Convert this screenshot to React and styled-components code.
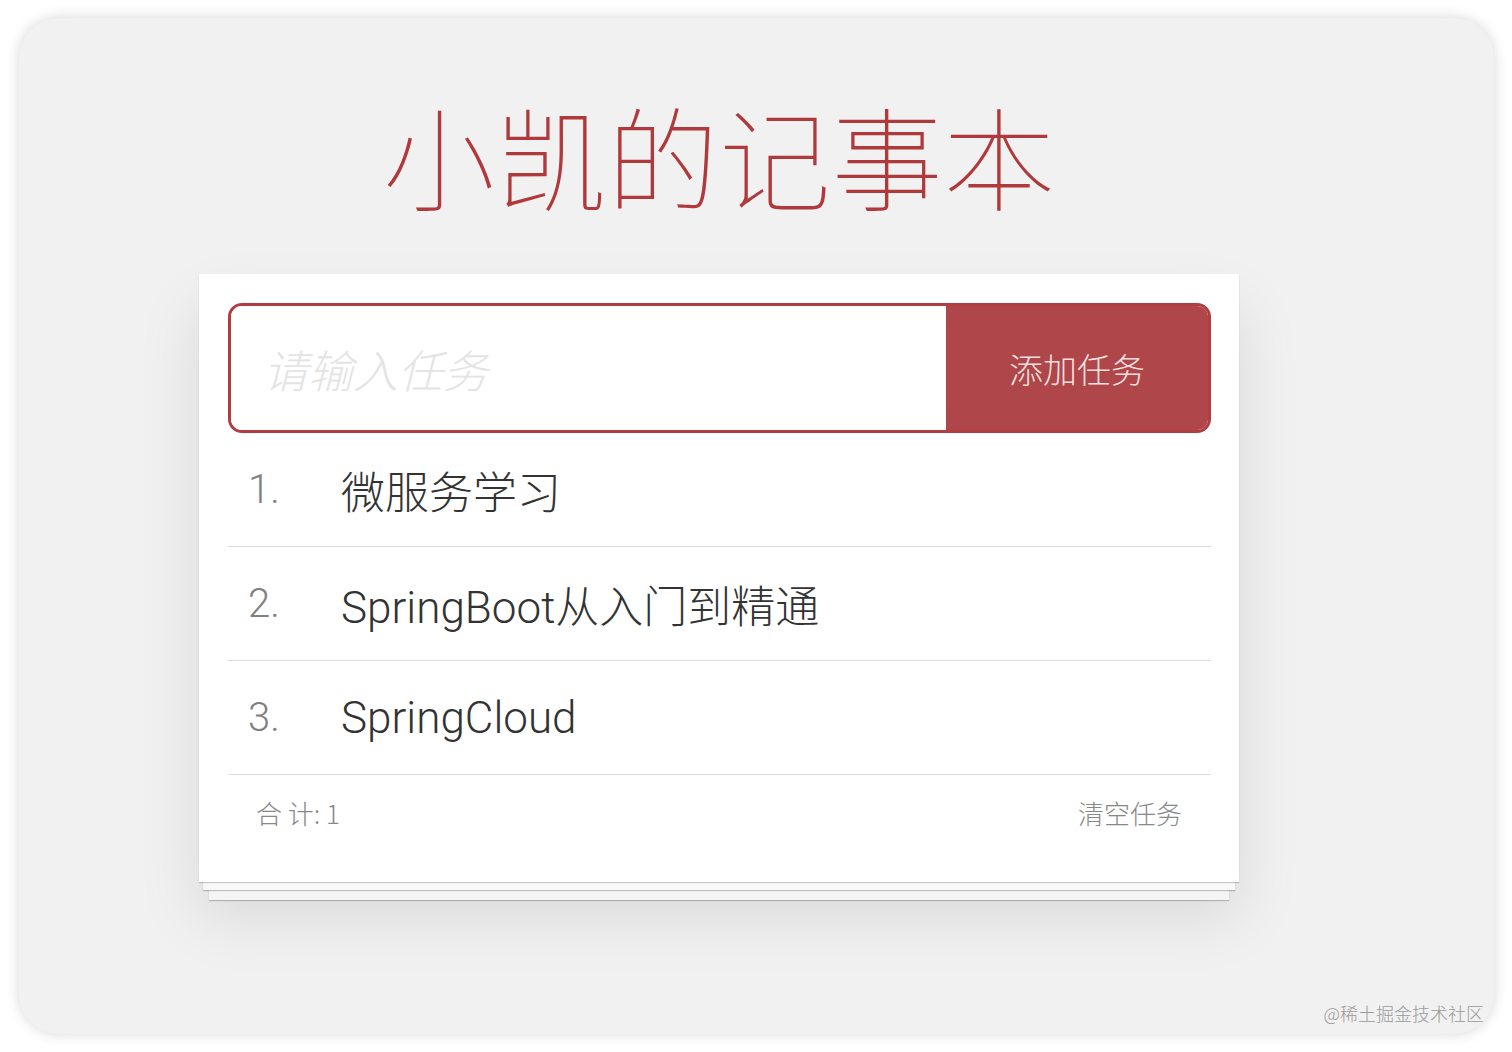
import React, { useState } from "react";
import styled, { createGlobalStyle } from "styled-components";

const GlobalStyle = createGlobalStyle`
  html, body {
    margin: 0;
    padding: 0;
    background: #ffffff;
  }
  body {
    font-family: "Helvetica Neue", Roboto, "Noto Sans CJK SC", sans-serif;
    font-weight: 300;
  }
`;

const tasks = ["微服务学习", "SpringBoot从入门到精通", "SpringCloud"];

const App = () => {
  const [value, setValue] = useState("");

  return (
    <>
      <GlobalStyle />
      <Panel>
        <Column>
          <Title>小凯的记事本</Title>
          <Card>
            <InputGroup>
              <TaskInput
                placeholder="请输入任务"
                value={value}
                onChange={(e) => setValue(e.target.value)}
              />
              <AddButton type="button">添加任务</AddButton>
            </InputGroup>
            <List>
              {tasks.map((t, i) => (
                <Item key={t}>
                  <Index>{i + 1}.</Index>
                  <ItemText>{t}</ItemText>
                </Item>
              ))}
            </List>
            <Footer>
              <FooterText>合 计: 1</FooterText>
              <FooterText>清空任务</FooterText>
            </Footer>
          </Card>
        </Column>
        <Watermark>@稀土掘金技术社区</Watermark>
      </Panel>
    </>
  );
};

const Panel = styled.div`
  position: relative;
  margin: 18px 18px 18px 19px;
  height: 1016px;
  box-sizing: border-box;
  background: #f1f1f1;
  border-radius: 40px;
  box-shadow: 0 0 14px rgba(0, 0, 0, 0.16);
  padding: 66px 255px 0 180px;
`;

const Column = styled.div`
  display: flex;
  flex-direction: column;
  align-items: stretch;
`;

const Title = styled.h1`
  margin: 0 0 50px;
  height: 140px;
  line-height: 140px;
  text-align: center;
  font-family: "Noto Sans CJK SC", sans-serif;
  font-size: 112px;
  font-weight: 100;
  color: #b0393c;
  letter-spacing: 0;
`;

const Card = styled.div`
  background: #fff;
  padding: 29px 28px 0 29px;
  height: 608px;
  box-sizing: border-box;
  box-shadow: 0 1px 1px rgba(0, 0, 0, 0.2),
    0 12px 0 -4px #f8f8f8,
    0 13px 1px -4px rgba(0, 0, 0, 0.22),
    0 28px 0 -10px #f4f4f4,
    0 29px 1px -10px rgba(0, 0, 0, 0.22),
    0 34px 60px rgba(0, 0, 0, 0.1);
`;

const InputGroup = styled.div`
  display: flex;
  height: 130px;
  box-sizing: border-box;
  border: 3px solid #b13d41;
  border-radius: 14px;
  overflow: hidden;
`;

const TaskInput = styled.input`
  flex: 1;
  min-width: 0;
  border: none;
  outline: none;
  background: #fff;
  padding: 0 0 0 32px;
  font-family: "Noto Sans CJK SC", sans-serif;
  font-size: 45px;
  font-weight: 300;
  color: #333;

  &::placeholder {
    color: #e4e4e4;
    font-style: italic;
  }
`;

const AddButton = styled.button`
  width: 262px;
  border: none;
  outline: none;
  background: #af4649;
  color: rgba(255, 240, 240, 0.92);
  font-family: "Noto Sans CJK SC", sans-serif;
  font-size: 34px;
  font-weight: 300;
  padding: 0;
  cursor: pointer;
`;

const List = styled.ul`
  list-style: none;
  margin: 0;
  padding: 0;
`;

const Item = styled.li`
  display: flex;
  align-items: center;
  height: 114px;
  box-sizing: border-box;
  border-bottom: 1.5px solid #dcdcdc;
  padding: 0 0 0 20px;
`;

const Index = styled.span`
  width: 93px;
  font-size: 40px;
  color: #808080;
`;

const ItemText = styled.span`
  font-family: "Helvetica Neue", Roboto, "Noto Sans CJK SC", sans-serif;
  font-size: 44px;
  font-weight: 300;
  color: #333;
`;

const Footer = styled.div`
  display: flex;
  justify-content: space-between;
  align-items: center;
  padding: 19px 29px 0 28px;
`;

const FooterText = styled.span`
  font-family: "Noto Sans CJK SC", sans-serif;
  font-size: 26px;
  font-weight: 300;
  color: #888;
`;

const Watermark = styled.div`
  position: absolute;
  right: 10px;
  bottom: 8px;
  font-family: "Noto Sans CJK SC", sans-serif;
  font-size: 18px;
  color: #9a9a9a;
`;

export default App;
